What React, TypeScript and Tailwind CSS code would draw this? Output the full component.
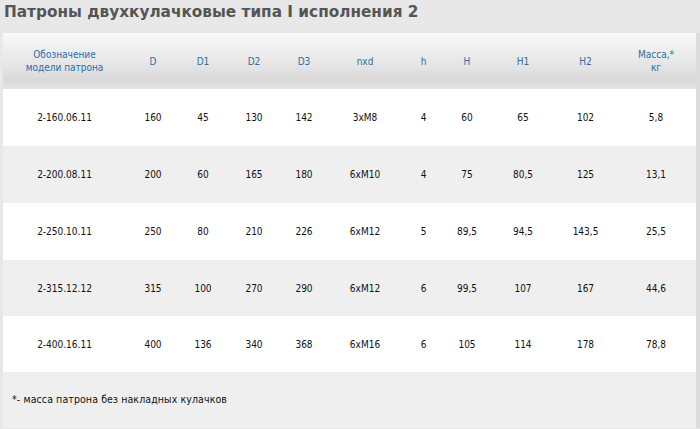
const cols = "grid grid-cols-[123px_54px_46px_56px_44px_78px_39px_48px_64px_61px_80px]";

const headers = ["Обозначение\nмодели патрона", "D", "D1", "D2", "D3", "nxd", "h", "H", "H1", "H2", "Масса,*\nкг"];

const rows = [
  ["2-160.06.11", "160", "45", "130", "142", "3xM8", "4", "60", "65", "102", "5,8"],
  ["2-200.08.11", "200", "60", "165", "180", "6xM10", "4", "75", "80,5", "125", "13,1"],
  ["2-250.10.11", "250", "80", "210", "226", "6xM12", "5", "89,5", "94,5", "143,5", "25,5"],
  ["2-315.12.12", "315", "100", "270", "290", "6xM12", "6", "99,5", "107", "167", "44,6"],
  ["2-400.16.11", "400", "136", "340", "368", "6xM16", "6", "105", "114", "178", "78,8"],
];

const heights = ["h-[57px]", "h-[57px]", "h-[57px]", "h-[56px]", "h-[56px]"];

export default function App() {
  return (
    <div className="w-[700px] h-[429px] overflow-hidden bg-[#e8e8e8] font-['DejaVu_Sans_Condensed','Liberation_Sans',sans-serif]">
      <h1 className="h-[33px] pl-[4px] pt-[1px] text-[15.3px] leading-[22px] font-bold text-[#555555] font-['DejaVu_Sans','Liberation_Sans',sans-serif]">
        Патроны двухкулачковые типа I исполнения 2
      </h1>
      <div className="ml-[3px] w-[697px] border-r-[4px] border-[#dcdcdc]">
        <div className={`${cols} h-[56px] bg-[linear-gradient(to_bottom,#f8f8f8_0%,#e6e6e6_55%,#d9d9d9_85%,#e4e4e4_100%)]`}>
          {headers.map((h, i) => (
            <div key={i} className="flex items-center justify-center text-center whitespace-pre-line text-[10px] leading-[13px] text-[#2a6ea6]">
              {h}
            </div>
          ))}
        </div>
        {rows.map((r, ri) => (
          <div key={ri} className={`${cols} ${heights[ri]} ${ri % 2 === 1 ? "bg-[#efefef]" : "bg-white"}`}>
            {r.map((c, ci) => (
              <div key={ci} className="flex items-center justify-center text-[10px] text-[#111]">
                {c}
              </div>
            ))}
          </div>
        ))}
        <div className="h-[56px] bg-[#efefef] flex items-center pl-[9px] text-[10.5px] tracking-[0.1px] text-[#111]">
          *- масса патрона без накладных кулачков
        </div>
      </div>
    </div>
  );
}
